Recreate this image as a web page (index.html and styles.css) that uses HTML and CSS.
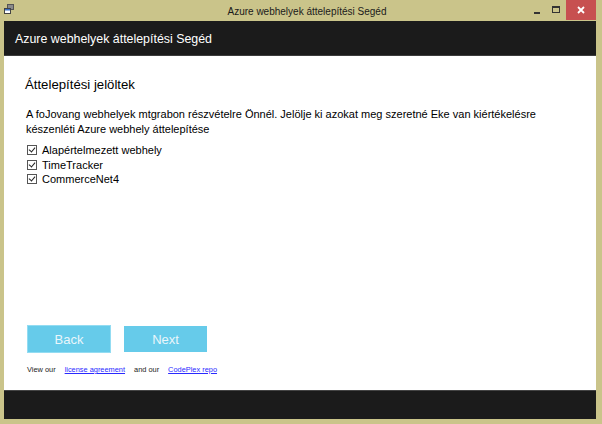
FILE: index.html
```html
<!DOCTYPE html>
<html lang="hu">
<head>
<meta charset="utf-8">
<title>Azure webhelyek áttelepítési Segéd</title>
<link rel="stylesheet" href="styles.css">
</head>
<body>
<div class="window">
  <div class="titlebar">
    <svg class="app-icon" width="10" height="10" viewBox="0 0 10 10">
      <rect x="3.5" y="0.5" width="6" height="5" fill="#8a8a8a" stroke="#555" stroke-width="1"/>
      <rect x="0.5" y="4.5" width="6" height="5" fill="#fff" stroke="#444" stroke-width="1"/>
      <rect x="1" y="5" width="5" height="1.5" fill="#3a6fc0"/>
    </svg>
    <div class="title">Azure webhelyek áttelepítési Segéd</div>
    <div class="controls">
      <div class="ctl min"><span class="dash"></span></div>
      <div class="ctl max"><span class="box"></span></div>
      <div class="ctl close">
        <svg width="8" height="8" viewBox="0 0 8 8"><path d="M1 1 L7 7 M7 1 L1 7" stroke="#fff" stroke-width="1.8"/></svg>
      </div>
    </div>
  </div>
  <div class="main">
    <div class="header">Azure webhelyek áttelepítési Segéd</div>
    <div class="content">
      <h1 class="heading">Áttelepítési jelöltek</h1>
      <p class="intro">A foJovang webhelyek mtgrabon részvételre Önnél. Jelölje ki azokat meg szeretné Eke van kiértékelésre készenléti Azure webhely áttelepítése</p>
      <ul class="sites">
        <li class="site"><span class="check"></span>Alapértelmezett webhely</li>
        <li class="site"><span class="check"></span>TimeTracker</li>
        <li class="site"><span class="check"></span>CommerceNet4</li>
      </ul>
      <div class="bottom">
        <div class="buttons">
          <button class="btn btn-back">Back</button>
          <button class="btn btn-next">Next</button>
        </div>
        <div class="links">
          <span>View our</span>
          <a href="#">license agreement</a>
          <span>and our</span>
          <a href="#">CodePlex repo</a>
        </div>
      </div>
    </div>
    <div class="footer"></div>
  </div>
</div>
</body>
</html>
```

FILE: styles.css
```css
* { box-sizing: border-box; }
html, body { margin: 0; padding: 0; }
body {
  font-family: "Liberation Sans", Arial, sans-serif;
  background: #cac48a;
}
.window {
  width: 602px;
  height: 424px;
  background: #cac48a;
  display: flex;
  flex-direction: column;
}
.titlebar {
  height: 21px;
  position: relative;
  display: flex;
  align-items: center;
}
.app-icon {
  position: absolute;
  left: 4px;
  top: 4px;
}
.title {
  flex: 1;
  text-align: center;
  font-size: 10px;
  color: #1a1a1a;
  padding-top: 1px;
  padding-left: 12px;
}
.controls {
  position: absolute;
  right: 6px;
  top: 0;
  display: flex;
  height: 20px;
}
.ctl {
  width: 26px;
  height: 20px;
  display: flex;
  align-items: center;
  justify-content: center;
}
.min { width: 18px; }
.dash {
  display: block;
  width: 6px;
  height: 2px;
  background: #333;
  margin-top: 5px;
}
.max { width: 20px; }
.box {
  display: block;
  width: 8px;
  height: 7px;
  border: 1px solid #333;
  border-top-width: 2px;
  margin-top: -2px;
}
.close {
  width: 30px;
  background: #c75050;
}
.close svg { margin-top: -1px; }
.main {
  flex: 1;
  margin: 0 6px 5px 4px;
  display: flex;
  flex-direction: column;
}
.header {
  height: 35px;
  background: #1b1b1b;
  border-bottom: 1px solid #3c3c3c;
  color: #ffffff;
  font-size: 12.4px;
  padding-left: 11px;
  display: flex;
  align-items: center;
  padding-top: 1px;
}
.content {
  flex: 1;
  background: #ffffff;
  padding: 21px 0 15px 21px;
  display: flex;
  flex-direction: column;
  color: #000;
}
.heading {
  margin: 0;
  font-size: 13.2px;
  font-weight: normal;
  line-height: 16px;
}
.intro {
  margin: 14px 0 0 1px;
  font-size: 11px;
  line-height: 15px;
  width: 530px;
}
.sites {
  list-style: none;
  margin: 6px 0 0 2px;
  padding: 0;
}
.site {
  display: flex;
  align-items: center;
  font-size: 11px;
  line-height: 14.5px;
}
.check {
  width: 10px;
  height: 10px;
  border: 1px solid #555;
  margin-right: 5px;
  position: relative;
  background: #fff;
}
.check::after {
  content: "";
  position: absolute;
  left: 2px;
  top: 0px;
  width: 3px;
  height: 5px;
  border-right: 1.5px solid #222;
  border-bottom: 1.5px solid #222;
  transform: rotate(40deg);
}
.bottom {
  margin-top: auto;
  padding-left: 2px;
}
.buttons {
  display: flex;
  align-items: center;
  gap: 13px;
}
.btn {
  font-family: "Liberation Sans", Arial, sans-serif;
  font-size: 13px;
  color: #eaf6fb;
  background: #66cbea;
  border: none;
  padding: 0;
  text-align: center;
}
.btn-back {
  width: 84px;
  height: 28px;
  border: 1px solid #93dcf2;
}
.btn-next {
  width: 83px;
  height: 26px;
}
.links {
  margin-top: 12px;
  display: flex;
  gap: 9px;
  font-size: 7.4px;
  line-height: 10px;
  color: #222;
}
.links a {
  color: #2a2aff;
  text-decoration: underline;
}
.footer {
  height: 29px;
  background: #1b1b1b;
  border-top: 1px solid #444;
}
```
